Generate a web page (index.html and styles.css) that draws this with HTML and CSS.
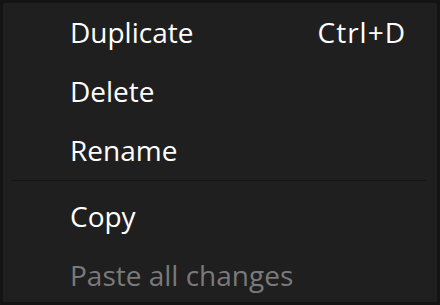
FILE: index.html
```html
<!DOCTYPE html>
<html lang="en">

<head>
  <meta charset="UTF-8">
  <title>Menu</title>
  <link rel="stylesheet" href="styles.css">
</head>

<body>
  <div class="menu">
    <div class="menu-item">
      <span class="label">Duplicate</span>
      <span class="shortcut">Ctrl+D</span>
    </div>
    <div class="menu-item">
      <span class="label">Delete</span>
    </div>
    <div class="menu-item">
      <span class="label">Rename</span>
    </div>
    <div class="separator"></div>
    <div class="menu-item">
      <span class="label">Copy</span>
    </div>
    <div class="menu-item disabled">
      <span class="label">Paste all changes</span>
    </div>
  </div>
</body>

</html>
```

FILE: styles.css
```css
body {
  margin: 0;
  padding: 0;
  background-color: #141414;
  font-family: "Open Sans", "Noto Sans", sans-serif;
}

.menu {
  box-sizing: border-box;
  width: 440px;
  height: 305px;
  border: 3px solid #141414;
  background-color: #1f1f1f;
  overflow: hidden;
}

.menu-item {
  display: flex;
  align-items: center;
  justify-content: space-between;
  height: 59px;
  padding: 0 31px 0 67px;
  font-size: 28px;
  line-height: 1;
  color: #ffffff;
}

.menu-item .label,
.menu-item .shortcut {
  margin-top: -2px;
}

.menu-item .shortcut {
  letter-spacing: 1px;
}

.menu-item.disabled {
  color: #7a7a7a;
}

.separator {
  height: 1px;
  margin: 0 11px 6px 8px;
  background-color: #141414;
}
```
